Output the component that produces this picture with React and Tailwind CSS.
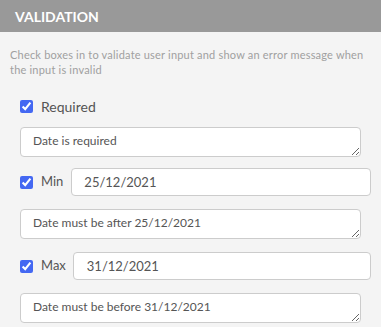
import { useState } from "react";

function Check({ checked, onChange }) {
  return (
    <input
      type="checkbox"
      checked={checked}
      onChange={onChange}
      className="w-[13px] h-[13px] m-0 accent-[#4468f2] shrink-0"
    />
  );
}

function Message({ value, onChange }) {
  return (
    <div className="pr-[10px]">
      <textarea
        value={value}
        onChange={onChange}
        className="block w-full h-[30px] rounded border border-[#cccccc] bg-white px-[12px] py-[5px] text-[12px] leading-[16px] text-[#555] outline-none"
      />
    </div>
  );
}

export default function App() {
  const [form, setForm] = useState({
    required: true,
    requiredMsg: "Date is required",
    min: true,
    minDate: "25/12/2021",
    minMsg: "Date must be after 25/12/2021",
    max: true,
    maxDate: "31/12/2021",
    maxMsg: "Date must be before 31/12/2021",
  });

  const set = (key) => (e) =>
    setForm({
      ...form,
      [key]: e.target.type === "checkbox" ? e.target.checked : e.target.value,
    });

  return (
    <div
      className="w-[381px] h-[327px] bg-[#f4f4f4] overflow-hidden"
      style={{ fontFamily: "Lato, 'Open Sans', sans-serif" }}
    >
      <div className="h-[32px] bg-[#999999] flex items-center px-[15px]">
        <h2 className="text-white font-bold text-[14px]">VALIDATION</h2>
      </div>

      <div className="px-[10px] pt-[15px]">
        <p className="text-[11px] leading-[15px] text-[#a0a0a0] tracking-[0.2px]">
          Check boxes in to validate user input and show an error message when
          the input is invalid
        </p>

        <div className="pl-[10px] pt-[16px] flex flex-col">
          <label className="flex items-center gap-[8px] h-[14px] mt-[6px]">
            <Check checked={form.required} onChange={set("required")} />
            <span className="text-[14px] text-[#555]">Required</span>
          </label>
          <div className="mt-[14px]">
            <Message value={form.requiredMsg} onChange={set("requiredMsg")} />
          </div>

          <div className="flex items-center mt-[11px]">
            <label className="flex items-center gap-[8px]">
              <Check checked={form.min} onChange={set("min")} />
              <span className="text-[13px] text-[#555]">Min</span>
            </label>
            <input
              value={form.minDate}
              onChange={set("minDate")}
              className="ml-[8px] flex-1 h-[28px] rounded border border-[#cccccc] bg-white px-[12px] text-[13px] text-[#555] outline-none"
            />
          </div>
          <div className="mt-[13px]">
            <Message value={form.minMsg} onChange={set("minMsg")} />
          </div>

          <div className="flex items-center mt-[13px]">
            <label className="flex items-center gap-[8px]">
              <Check checked={form.max} onChange={set("max")} />
              <span className="text-[13px] text-[#555]">Max</span>
            </label>
            <input
              value={form.maxDate}
              onChange={set("maxDate")}
              className="ml-[7px] flex-1 h-[28px] rounded border border-[#cccccc] bg-white px-[13px] text-[13px] text-[#555] outline-none"
            />
          </div>
          <div className="mt-[13px]">
            <Message value={form.maxMsg} onChange={set("maxMsg")} />
          </div>
        </div>
      </div>
    </div>
  );
}
